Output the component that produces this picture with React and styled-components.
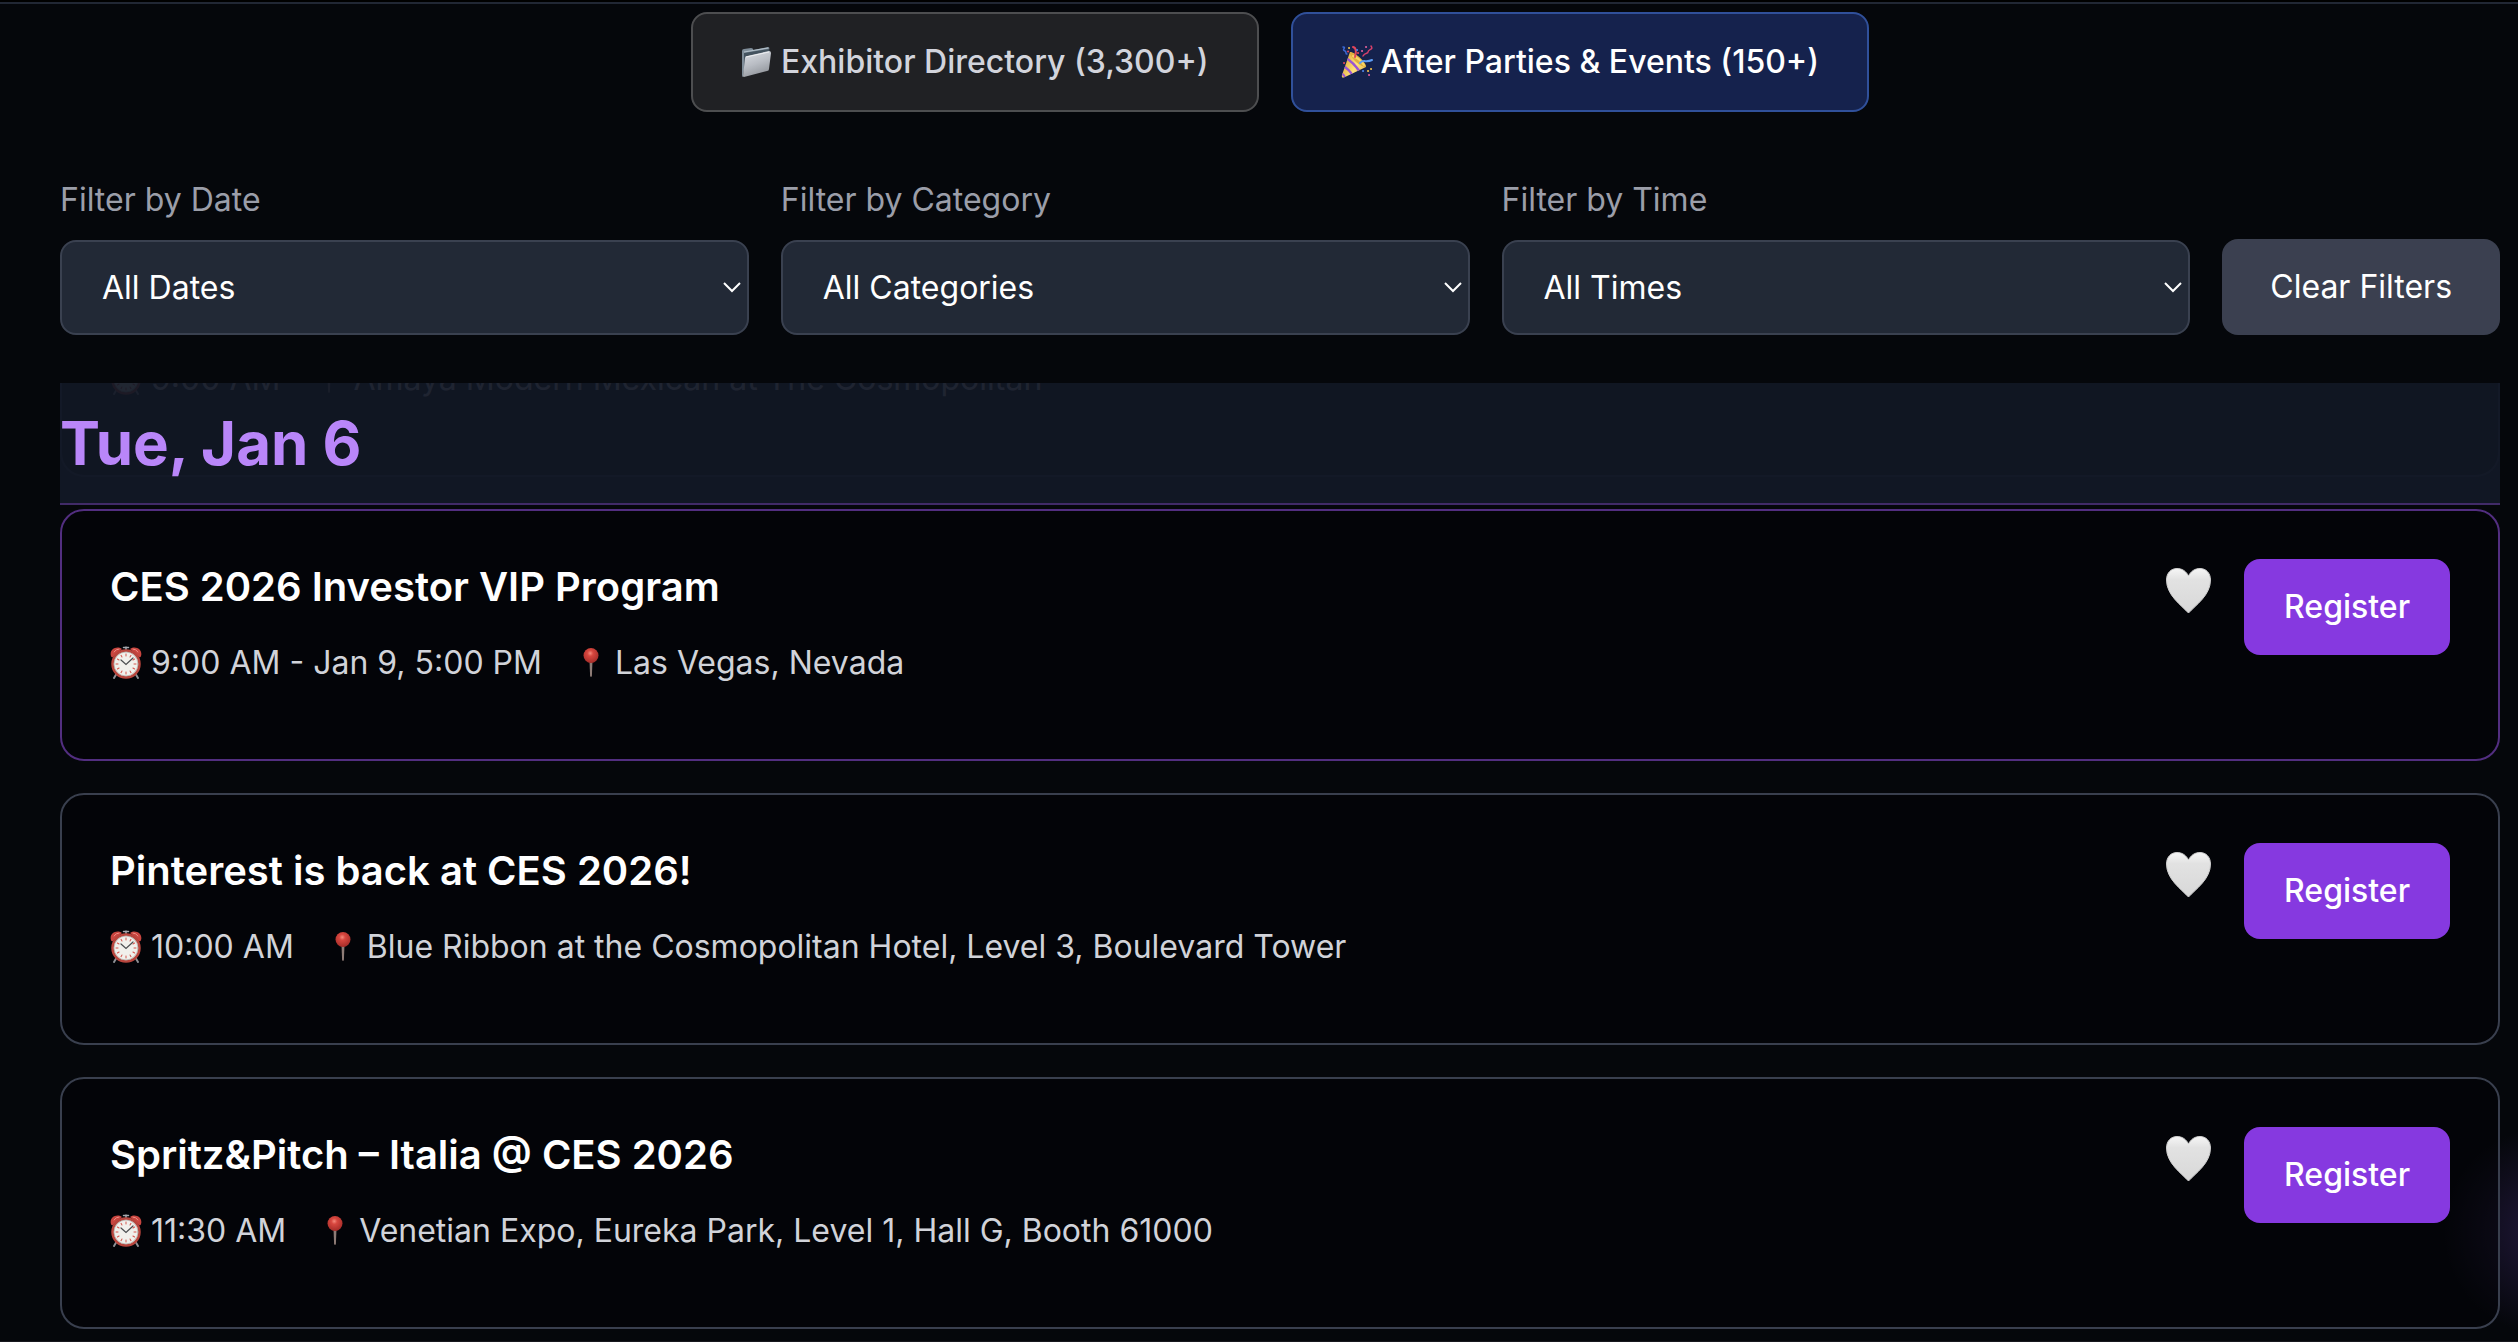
import React from 'react';
import styled, {createGlobalStyle} from 'styled-components';

const GlobalStyle = createGlobalStyle`
  *, *::before, *::after {
    box-sizing: border-box;
  }

  body {
    margin: 0;
    background: #05070b;
    color: #fff;
    font-family: Inter, "Liberation Sans", sans-serif;
    font-size: 32px;
    line-height: 48px;
  }

  button, select {
    font: inherit;
    color: inherit;
    cursor: pointer;
  }
`;

const Page = styled.div`
  min-height: 100vh;
  display: flex;
  flex-direction: column;
  border-bottom: 1px solid #18181e;
  background: radial-gradient(circle 104px at calc(100% + 30px) calc(100% - 110px), #21183a, transparent) no-repeat;
`;

const TopBar = styled.header`
  height: 4px;
  background: #000;
  border-bottom: 2px solid #212734;
`;

const Main = styled.main`
  padding: 8px 18px 12px 60px;
`;

const Tabs = styled.nav`
  display: flex;
  flex-wrap: wrap;
  justify-content: center;
  gap: 32px;
  margin-bottom: 64px;
`;

const Tab = styled.button`
  display: flex;
  align-items: center;
  gap: 8px;
  padding: 24px 48px;
  border: 2px solid ${({$active}) => ($active ? '#30509a' : '#4d4e50')};
  border-radius: 16px;
  background: ${({$active}) => ($active ? '#15224d' : '#202124')};
  color: ${({$active}) => ($active ? '#fff' : '#d2d4dc')};
  font-weight: 500;
`;

const Filters = styled.form`
  display: flex;
  align-items: flex-end;
  gap: 32px;
  margin-bottom: 48px;
`;

const Field = styled.div`
  flex: 1;
  min-width: 0;
  display: flex;
  flex-direction: column;
  gap: 16px;
`;

const Label = styled.label`
  color: #9b9ea9;
`;

const SelectWrap = styled.div`
  position: relative;
  display: flex;

  svg {
    position: absolute;
    right: 8px;
    top: 50%;
    margin-top: -6px;
    pointer-events: none;
  }
`;

const Select = styled.select`
  appearance: none;
  width: 100%;
  height: 95px;
  padding: 0 40px;
  border: 2px solid #3a4150;
  border-radius: 16px;
  background: #222936;
`;

const ClearButton = styled.button`
  padding: 24px 48px;
  border: 0;
  border-radius: 16px;
  background: #3b4050;
`;

const DateHeader = styled.div`
  position: relative;
  overflow: hidden;
  padding: 24px 0;
  margin-bottom: 4px;
  border-bottom: 2px solid #412b68;
  background: #111724;
`;

const DateTitle = styled.h2`
  position: relative;
  margin: 0;
  font-size: 60px;
  line-height: 72px;
  font-weight: 700;
  color: #b986f9;
`;

const PassedCard = styled.div`
  position: absolute;
  left: 0;
  right: 0;
  bottom: 26px;
  opacity: 0.07;
`;

const EventList = styled.div`
  display: flex;
  flex-direction: column;
  gap: 32px;
`;

const Card = styled.article`
  display: flex;
  align-items: flex-start;
  justify-content: space-between;
  gap: 32px;
  padding: 48px;
  border: 2px solid ${({$featured}) => ($featured ? '#522e80' : '#393f4e')};
  border-radius: 24px;
  background: rgba(1, 1, 5, 0.5);
`;

const Info = styled.div`
  display: flex;
  flex-direction: column;
  gap: 24px;
  padding-bottom: 24px;
`;

const Title = styled.h3`
  margin: 0;
  font-size: 40px;
  line-height: 56px;
  font-weight: 600;
`;

const Meta = styled.div`
  display: flex;
  flex-wrap: wrap;
  gap: 0 32px;
  color: #d1d3d9;
`;

const MetaItem = styled.span`
  display: flex;
  align-items: center;
  gap: 9px;
`;

const Actions = styled.div`
  display: flex;
  align-items: flex-start;
  gap: 32px;
`;

const HeartButton = styled.button`
  display: flex;
  padding: 8px 0;
  border: 0;
  background: none;
`;

const RegisterButton = styled.button`
  padding: 24px 40px;
  border: 0;
  border-radius: 16px;
  background: #8639e0;
  font-weight: 500;
`;

function FolderIcon() {
    return (
        <svg width="32" height="32" viewBox="0 0 32 32" aria-hidden="true">
            <defs>
                <linearGradient id="folderFront" x1="0.2" y1="0" x2="0.6" y2="1">
                    <stop offset="0" stopColor="#d9dce2"/>
                    <stop offset="0.5" stopColor="#b9bdc4"/>
                    <stop offset="1" stopColor="#8f9399"/>
                </linearGradient>
            </defs>
            <path d="M1 5 Q1 3 3 3 L10 2 Q12 2 12.500 4 L27 1 Q29 1 28 4 L5 9 L2 31 Q1 31 1 29Z" fill="#7f8d99"/>
            <path d="M3 7 L28 3 L29 6 L5 10 L3 29Z" fill="#44535f"/>
            <path d="M3 6 L27 2" stroke="#b5c2cc" strokeWidth="1"/>
            <path d="M6 10 L28 5 Q30 5 30 7 L28 23 Q28 25 26 25 L3 31 Q2 31 2 30 L4 12 Q4 10 6 10Z" fill="url(#folderFront)"/>
            <path d="M5 11 L28 6" stroke="#eceef1" strokeWidth="1"/>
        </svg>
    );
}

function PartyIcon() {
    return (
        <svg width="32" height="34" viewBox="0 0 32 34" fill="none" strokeLinecap="round" aria-hidden="true">
            <defs>
                <linearGradient id="partyCone" x1="0" y1="0.3" x2="1" y2="0.8">
                    <stop offset="0" stopColor="#d99a2b"/>
                    <stop offset="0.5" stopColor="#ffe27a"/>
                    <stop offset="1" stopColor="#d9a036"/>
                </linearGradient>
                <clipPath id="partyClip">
                    <path d="M9 7 C14 8 22 15 25 22 L4 32 Q0 34 1 30Z"/>
                </clipPath>
            </defs>
            <g clipPath="url(#partyClip)">
                <rect width="32" height="34" fill="url(#partyCone)"/>
                <path d="M5 13 Q12 17 19 27" stroke="#9a55d4" strokeWidth="2.500"/>
                <path d="M2 21 Q8 24 12 31" stroke="#9a55d4" strokeWidth="2.500"/>
                <path d="M0 28 Q4 30 5 34" stroke="#9a55d4" strokeWidth="2"/>
            </g>
            <path d="M9 7 C8 11 18 22 25 22 C26 18 14 7 9 7Z" fill="#e0b040"/>
            <path d="M12 11 Q19 14 23 20" stroke="#f8d768" strokeWidth="2"/>
            <path d="M14 12 C15 8 16 3 12 2" stroke="#e1455b" strokeWidth="2"/>
            <path d="M19 18 C22 14 25 18 31 15" stroke="#5b9cf5" strokeWidth="2"/>
            <path d="M2 2 C6 2 0 5 4 6 C6 7 4 9 6 9" stroke="#3d6ad6" strokeWidth="1.500"/>
            <path d="M30 1 C33 5 27 4 27 7 C27 9 24 7 22 11" stroke="#d8406a" strokeWidth="1.500"/>
            <path d="M7 6.500h.1M17 8h.1M3 18h.1" stroke="#e1455b" strokeWidth="2"/>
            <path d="M21 6h.1M25 2h.1M28 30h.1" stroke="#e1609c" strokeWidth="2"/>
            <path d="M8 3h.1M30 24h.1M27 26h.1" stroke="#f2c14a" strokeWidth="2"/>
            <path d="M16 5h.1M22 26h.1" stroke="#4c86e8" strokeWidth="2"/>
        </svg>
    );
}

function ClockIcon() {
    const ticks = [0, 30, 60, 90, 120, 150, 180, 210, 240, 270, 300, 330];

    return (
        <svg width="32" height="34" viewBox="0 0 32 34" fill="none" strokeLinecap="round" aria-hidden="true">
            <path d="M7 27 L4 32 M25 27 L28 32" stroke="#8d8f94" strokeWidth="2"/>
            <path d="M16 1 V5 M13.500 1.500 H18.500" stroke="#a4a7ad" strokeWidth="1.500"/>
            <path d="M1 10 C-1 4 6 -1 12 3 L3 11 Q1.500 12 1 10Z" fill="#c8453f"/>
            <path d="M31 10 C33 4 26 -1 20 3 L29 11 Q30.500 12 31 10Z" fill="#c8453f"/>
            <path d="M4 6 Q6 3 9 3 M23 3 Q26 3 28 6" stroke="#ef8d84" strokeWidth="1"/>
            <circle cx="16" cy="18" r="13.500" fill="#f1f0ec" stroke="#b8453d" strokeWidth="2.500"/>
            <circle cx="16" cy="18" r="12" stroke="#8f8a86" strokeWidth="0.500"/>
            {ticks.map((angle) => (
                <path
                    key={angle}
                    d="M16 8 V10"
                    stroke="#d4574f"
                    strokeWidth="1"
                    transform={`rotate(${angle} 16 18)`}
                />
            ))}
            <path d="M11 14 L16 18.500 L23 12" stroke="#4b4d50" strokeWidth="1.200"/>
        </svg>
    );
}

function PinIcon() {
    return (
        <svg width="32" height="32" viewBox="0 0 32 32" aria-hidden="true">
            <defs>
                <radialGradient id="pinHead" cx="0.45" cy="0.35" r="0.65">
                    <stop offset="0" stopColor="#f58a7c"/>
                    <stop offset="0.3" stopColor="#d8473f"/>
                    <stop offset="1" stopColor="#a52c28"/>
                </radialGradient>
            </defs>
            <path d="M15.500 14 H18.500 L17.900 29 Q17 31 16.100 29Z" fill="#8e7c76"/>
            <circle cx="17" cy="8.500" r="7.500" fill="url(#pinHead)"/>
        </svg>
    );
}

function HeartIcon() {
    return (
        <svg width="48" height="48" viewBox="0 0 48 48" aria-hidden="true">
            <defs>
                <linearGradient id="heartFill" x1="0" y1="0" x2="0" y2="1">
                    <stop offset="0" stopColor="#f6f6f6"/>
                    <stop offset="0.25" stopColor="#e2e2e2"/>
                    <stop offset="1" stopColor="#d8d8d8"/>
                </linearGradient>
            </defs>
            <path
                d="M24.500 46 C17 38 2.500 28 2.500 13 C2.500 6 7 1.500 13 1.500 C18 1.500 22 4 24.500 9 C27 4 31 1.500 36 1.500 C42 1.500 46.500 6 46.500 13 C46.500 28 32 38 24.500 46Z"
                fill="url(#heartFill)"
                stroke="#cdcdcd"
                strokeWidth="1"
            />
        </svg>
    );
}

function ChevronIcon() {
    return (
        <svg width="18" height="11" viewBox="0 0 18 11" fill="none" aria-hidden="true">
            <path d="M1 1 L9 9 L17 1" stroke="#fff" strokeWidth="2"/>
        </svg>
    );
}

const FILTERS = [
    {id: 'date', label: 'Filter by Date', all: 'All Dates'},
    {id: 'category', label: 'Filter by Category', all: 'All Categories'},
    {id: 'time', label: 'Filter by Time', all: 'All Times'},
];

const EVENTS = [
    {
        title: 'CES 2026 Investor VIP Program',
        time: '9:00 AM - Jan 9, 5:00 PM',
        place: 'Las Vegas, Nevada',
        featured: true,
    },
    {
        title: 'Pinterest is back at CES 2026!',
        time: '10:00 AM',
        place: 'Blue Ribbon at the Cosmopolitan Hotel, Level 3, Boulevard Tower',
    },
    {
        title: 'Spritz&Pitch – Italia @ CES 2026',
        time: '11:30 AM',
        place: 'Venetian Expo, Eureka Park, Level 1, Hall G, Booth 61000',
    },
];

function EventMeta({time, place}) {
    return (
        <Meta>
            <MetaItem><ClockIcon/>{time}</MetaItem>
            <MetaItem><PinIcon/>{place}</MetaItem>
        </Meta>
    );
}

function EventCard({event}) {
    return (
        <Card $featured={event.featured}>
            <Info>
                <Title>{event.title}</Title>
                <EventMeta time={event.time} place={event.place}/>
            </Info>
            <Actions>
                <HeartButton type="button" aria-label="Save event"><HeartIcon/></HeartButton>
                <RegisterButton type="button">Register</RegisterButton>
            </Actions>
        </Card>
    );
}

export default function App() {
    const [tab, setTab] = React.useState('events');

    return (
        <Page>
            <GlobalStyle/>
            <TopBar/>
            <Main>
                <Tabs>
                    <Tab type="button" $active={tab === 'directory'} onClick={() => setTab('directory')}>
                        <FolderIcon/>Exhibitor Directory (3,300+)
                    </Tab>
                    <Tab type="button" $active={tab === 'events'} onClick={() => setTab('events')}>
                        <PartyIcon/>After Parties &amp; Events (150+)
                    </Tab>
                </Tabs>

                <Filters>
                    {FILTERS.map((filter) => (
                        <Field key={filter.id}>
                            <Label htmlFor={filter.id}>{filter.label}</Label>
                            <SelectWrap>
                                <Select id={filter.id}>
                                    <option>{filter.all}</option>
                                </Select>
                                <ChevronIcon/>
                            </SelectWrap>
                        </Field>
                    ))}
                    <ClearButton type="reset">Clear Filters</ClearButton>
                </Filters>

                <DateHeader>
                    <PassedCard aria-hidden="true">
                        <Card>
                            <Info>
                                <EventMeta time="9:00 AM" place="Amaya Modern Mexican at The Cosmopolitan"/>
                            </Info>
                        </Card>
                    </PassedCard>
                    <DateTitle>Tue, Jan 6</DateTitle>
                </DateHeader>

                <EventList>
                    {EVENTS.map((event) => (
                        <EventCard key={event.title} event={event}/>
                    ))}
                </EventList>
            </Main>
        </Page>
    );
}
